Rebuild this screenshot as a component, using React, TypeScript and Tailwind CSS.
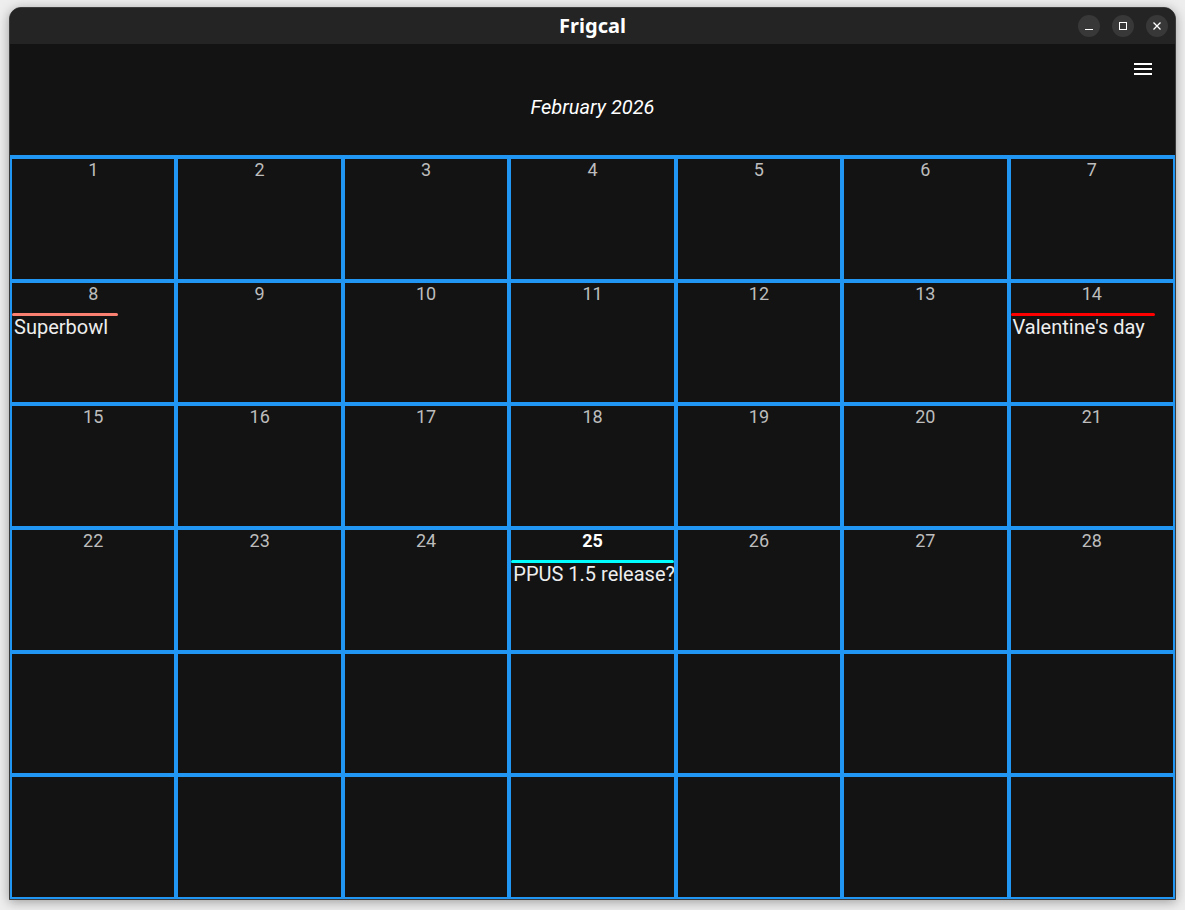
import React from 'react';

type CalEvent = {
    label: string;
    color: string;
};

const EVENTS: Record<number, CalEvent> = {
    8: { label: 'Superbowl', color: 'bg-[#fa8072]' },
    14: { label: "Valentine's day", color: 'bg-[#ff0000]' },
    25: { label: 'PPUS 1.5 release?', color: 'bg-[#00ffff]' },
};

const TODAY = 25;

const MenuIcon = () => (
    <svg width="24" height="24" viewBox="0 0 24 24" fill="#ffffff">
        <path d="M3 18h18v-2H3v2zm0-5h18v-2H3v2zm0-7v2h18V6H3z" />
    </svg>
);

const TitleButton: React.FC<{ children: React.ReactNode }> = ({ children }) => (
    <div className="w-[22px] h-[22px] rounded-full bg-[#383838] flex items-center justify-center">{children}</div>
);

const DayCell: React.FC<{ day?: number }> = ({ day }) => {
    const event = day ? EVENTS[day] : undefined;
    const isToday = day === TODAY;
    return (
        <div className="border-2 border-[#2196f3] overflow-hidden flex flex-col min-w-0 min-h-0">
            {day && (
                <div
                    className={`text-center text-[18px] leading-[21px] ${
                        isToday ? 'font-bold text-white' : 'text-[#bdbdbd]'
                    }`}
                >
                    {day}
                </div>
            )}
            {event && (
                <div className="mt-[9px] self-start inline-flex flex-col max-w-full">
                    <div className={`h-[3px] rounded-full ${event.color}`} />
                    <span className="pl-[2px] pr-[10px] whitespace-nowrap text-[20px] leading-[22px] text-[#eeeeee]">
                        {event.label}
                    </span>
                </div>
            )}
        </div>
    );
};

export default function App() {
    const cells: (number | undefined)[] = [];
    for (let i = 0; i < 42; i++) cells.push(i < 28 ? i + 1 : undefined);

    return (
        <div
            className="w-[1185px] h-[910px] bg-[#eeeeee] pl-[9px] pt-[7px]"
            style={{ fontFamily: 'Roboto, "Noto Sans", sans-serif' }}
        >
            <div className="w-[1167px] h-[893px] border border-[#3c3c3c] rounded-t-[12px] overflow-hidden flex flex-col bg-[#131313] shadow-[0_2px_12px_rgba(0,0,0,0.35)]">
                {/* title bar */}
                <div className="h-[36px] shrink-0 bg-[#242424] relative flex items-center justify-center">
                    <span
                        className="text-white font-bold text-[20px] leading-none"
                        style={{ fontFamily: '"Noto Sans", sans-serif' }}
                    >
                        Frigcal
                    </span>
                    <div className="absolute right-[7px] top-[7px] flex gap-[12px]">
                        <TitleButton>
                            <div className="w-[8px] h-[1px] bg-white mt-[6px]" />
                        </TitleButton>
                        <TitleButton>
                            <div className="w-[8px] h-[8px] border border-white" />
                        </TitleButton>
                        <TitleButton>
                            <svg width="10" height="10" viewBox="0 0 10 10" stroke="#ffffff" strokeWidth="1.3">
                                <path d="M1.5 1.5l7 7M8.5 1.5l-7 7" />
                            </svg>
                        </TitleButton>
                    </div>
                </div>

                {/* app header */}
                <div className="h-[111px] shrink-0 flex flex-col">
                    <div className="flex justify-end pt-[13px] pr-[20px]">
                        <MenuIcon />
                    </div>
                    <div className="mt-[14px] text-center italic text-[20px] leading-[24px] text-white">
                        February 2026
                    </div>
                </div>

                {/* month grid */}
                <div className="flex-1 border-t-2 border-[#2196f3] grid grid-cols-7 grid-rows-6 min-h-0">
                    {cells.map((d, i) => (
                        <DayCell key={i} day={d} />
                    ))}
                </div>
            </div>
        </div>
    );
}
